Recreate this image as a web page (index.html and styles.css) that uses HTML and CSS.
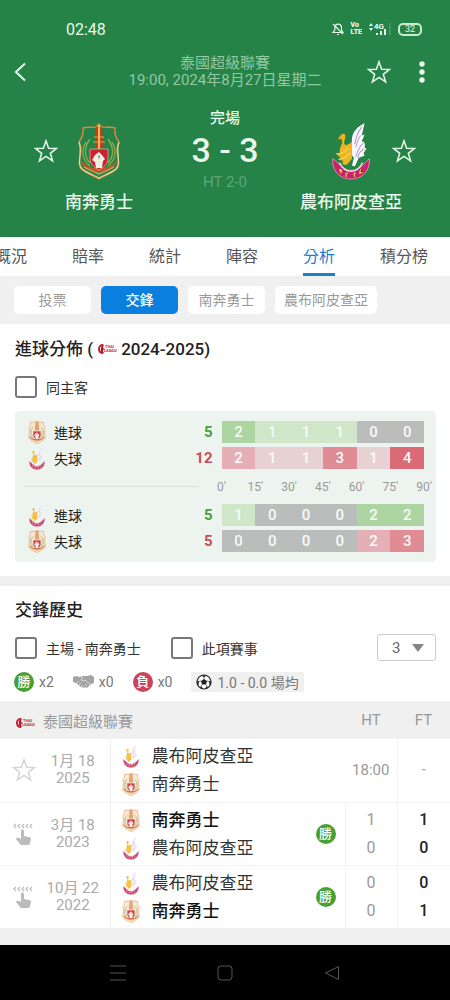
FILE: index.html
```html
<!DOCTYPE html>
<html lang="zh-Hant">
  <head>
    <meta charset="UTF-8" />
    <meta name="viewport" content="width=device-width, initial-scale=1.0" />
    <title>南奔勇士 3 - 3 農布阿皮查亞</title>
    <link rel="stylesheet" href="styles.css">
  </head>
  <body>
    <!-- Shared icons -->
    <svg class="sprite" aria-hidden="true">
      <symbol id="star" viewBox="0 0 24 24">
        <path d="M12 1.8l2.6 7.5 8 .1-6.3 4.9 2.3 7.6-6.6-4.5-6.6 4.5 2.3-7.6-6.3-4.9 8-.1z" fill="none" stroke="currentColor" stroke-width="1.5" stroke-linejoin="miter" />
      </symbol>

      <symbol id="warrior" viewBox="0 0 44 58">
        <path d="M22 2l3 3c4 0 9 0 13 1-1 6 1 10 4 14-3 5-2 9-1 14 0 5 2 7 0 11-4 6-13 8-19 12-6-4-15-6-19-12-2-4 0-6 0-11 1-5 2-9-1-14 3-4 5-8 4-14 4-1 9-1 13-1z" fill="currentColor" stroke="#d9883f" stroke-width="1.4" />
        <path d="M2 20c2 5 1 10 1 14-1 6-1 10 2 13 5 4 12 6 17 9 5-3 12-5 17-9 3-3 3-7 2-13 0-4-1-9 1-14" fill="none" stroke="#ecd9a0" stroke-width="1.2" />
        <path d="M9 20c-5 8-4 18 4 24M35 20c5 8 4 18-4 24M13 17c-6 8-6 18 0 24M31 17c6 8 6 18 0 24" fill="none" stroke="#8fae4c" stroke-width="1.3" />
        <path d="M19 5h2v20h-3zM23 5h2l1 20h-3z" fill="#c93a25" />
        <path d="M21 3h2v24h-2z" fill="#e9c04a" />
        <path d="M17 15h10M16 20h12" stroke="#dfa743" stroke-width="1.2" />
        <path d="M4 38c6 8 12 8 18 8s12 0 18-8c0 7-7 11-18 12C11 49 4 45 4 38z" fill="#bf5a2c" />
        <path d="M7 45c5 3 10 5 15 7 5-2 10-4 15-7" fill="none" stroke="#e3a14e" stroke-width="1.4" />
        <path d="M13 27h18v9c0 6-4 9-9 12-5-3-9-6-9-12z" fill="#cf2031" stroke="#f0a28e" stroke-width=".8" />
        <path d="M22 30l3 3 3 4-2 2-1 7h-6l-1-6-3-2 3-5z" fill="#e9f0e2" />
        <path d="M21 33l2 1-1 4z" fill="#758b78" />
      </symbol>

      <symbol id="bird" viewBox="0 0 42 60">
        <path d="M2 38c7 4 9 12 19 12s13-7 19-12c1 12-7 21-19 21S1 50 2 38z" fill="#c9206f" stroke="#eaa0bd" stroke-width=".8" />
        <path d="M9 42c3 6 7 9 12 9s9-3 12-9" fill="none" stroke="#d9e4da" stroke-width="1.5" />
        <path d="M22 17c1-8 6-12 13-16-1 5-2 9-3 13l3-1c-1 3-2 5-3 7 3 0 4 3 3 6l2 2-3 4 1 3-6 2-4 9-3-1 2-8-3-4z" fill="#fbf8fd" />
        <path d="M32 5c-4 6-6 11-7 18M31 14c-3 4-4 8-5 12M34 22c-5 3-6 8-8 14M35 28c-4 1-6 5-7 9" fill="none" stroke="#b49ad0" stroke-width="1.1" />
        <path d="M7 18l4-5c3-2 5 0 4 3-1 4-2 7 1 8l6-3v17l-5 6c-4 1-6-1-4-4l-6-1 3-2-5-5 5 1c-2-4 1-8 2-12l-1-4z" fill="#efb521" />
        <path d="M6 33c4 0 8-1 12-6M10 38c4 0 7-2 10-6" fill="none" stroke="#f7d85a" stroke-width="1.2" />
        <path d="M9 49l2 4M10 49l2 2M16 53v4M16 53h2M24 53l1 4M24 53h2M31 49l-1 4 3-1" stroke="#f4d94b" stroke-width="1.2" />
      </symbol>

      <symbol id="league" viewBox="0 0 20 14">
        <path d="M6 2C3 2 1 4 1 7s2 5 5 5l1-2C5 10 3 9 3 7s1-3 3-3z" fill="#c52636" />
        <path d="M4 5l3-3-1 4 2 1-2 1v3L4 9z" fill="#a81c2d" />
        <text x="8" y="6" font-size="4">THAI</text>
        <text x="7" y="10" font-size="4">LEAGUE</text>
      </symbol>

      <symbol id="tap" viewBox="0 0 22 24">
        <path d="M4 2L2 4l2 2M8 2L6 4l2 2M12 2l-2 2 2 2M16 2l-2 2 2 2M20 2l-2 2 2 2" fill="none" stroke="currentColor" stroke-width="1.2" />
        <path d="M9 9c0-2 3-2 3 0v5l5 1c1 0 2 1 2 2l-1 4c0 1-1 2-2 2H10c-1 0-1 0-2-1l-4-5c1-2 3-1 5 0z" fill="currentColor" />
      </symbol>
    </svg>

    <header class="match-header">
      <div class="status-bar">
        <span>02:48</span>
        <div class="status-icons">
          <svg width="12" height="14" viewBox="0 0 12 14" fill="none" stroke="currentColor" stroke-width="1.2">
            <path d="M1 10.500h10L9.500 8V5.500C9.500 1.500 4 1 3 4.500L2.800 8zM5 12.500h2M1 2l10 10" />
          </svg>
          <span class="volte">Vo<br>LTE</span>
          <svg width="22" height="14" viewBox="0 0 22 14" fill="currentColor">
            <path d="M0 4l2-3 2 3zM0 6h4L2 9z" />
            <text x="5" y="7" font-size="8" font-weight="700">4G</text>
            <path d="M7 11h2v2H7zM11 9h2v4h-2zM15 7h2v6h-2z" />
            <path d="M20.500 1h.8v12h-.8z" opacity=".4" />
          </svg>
          <span class="battery">32</span>
        </div>
      </div>

      <div class="title-bar">
        <button class="icon-btn back" aria-label="返回">
          <svg width="14" height="20" viewBox="0 0 14 20"><path d="M11 1.500L2 10l9 8.500" fill="none" stroke="currentColor" stroke-width="2" /></svg>
        </button>
        <p class="competition">泰國超級聯賽<br>19:00, 2024年8月27日星期二</p>
        <div class="title-actions">
          <button class="icon-btn" aria-label="收藏"><svg class="star"><use href="#star" /></svg></button>
          <button class="icon-btn" aria-label="更多">
            <svg width="8" height="24" viewBox="0 0 8 24" fill="currentColor"><circle cx="4" cy="4" r="2.700" /><circle cx="4" cy="12" r="2.700" /><circle cx="4" cy="20" r="2.700" /></svg>
          </button>
        </div>
      </div>

      <div class="match">
        <div class="team home">
          <button class="icon-btn" aria-label="收藏南奔勇士"><svg class="star"><use href="#star" /></svg></button>
          <svg class="team-logo"><use href="#warrior" /></svg>
          <h2>南奔勇士</h2>
        </div>
        <div class="score">
          <p class="state">完場</p>
          <p class="result">3 - 3</p>
          <p class="half">HT 2-0</p>
        </div>
        <div class="team away">
          <svg class="team-logo"><use href="#bird" /></svg>
          <button class="icon-btn" aria-label="收藏農布阿皮查亞"><svg class="star"><use href="#star" /></svg></button>
          <h2>農布阿皮查亞</h2>
        </div>
      </div>
    </header>

    <nav class="tabs">
      <a href="#">概況</a>
      <a href="#">賠率</a>
      <a href="#">統計</a>
      <a href="#">陣容</a>
      <a href="#" class="active">分析</a>
      <a href="#">積分榜</a>
    </nav>

    <div class="sub-tabs">
      <button>投票</button>
      <button class="active">交鋒</button>
      <button>南奔勇士</button>
      <button>農布阿皮查亞</button>
    </div>

    <main>
      <!-- Goal distribution -->
      <section class="goals">
        <h3>進球分佈 ( <svg class="league-logo"><use href="#league" /></svg> 2024-2025)</h3>
        <div class="filters">
          <label><input type="checkbox" />同主客</label>
        </div>

        <div class="chart">
          <div class="chart-row">
            <svg class="mini-logo"><use href="#warrior" /></svg>
            <span class="label">進球</span>
            <b class="total scored">5</b>
            <div class="bar"><span class="g2">2</span><span class="g1">1</span><span class="g1">1</span><span class="g1">1</span><span>0</span><span>0</span></div>
          </div>
          <div class="chart-row">
            <svg class="mini-logo"><use href="#bird" /></svg>
            <span class="label">失球</span>
            <b class="total conceded">12</b>
            <div class="bar"><span class="r2">2</span><span class="r1">1</span><span class="r1">1</span><span class="r3">3</span><span class="r1">1</span><span class="r4">4</span></div>
          </div>
          <div class="axis">
            <hr>
            <div class="ticks"><span>0'</span><span>15'</span><span>30'</span><span>45'</span><span>60'</span><span>75'</span><span>90'</span></div>
          </div>
          <div class="chart-row">
            <svg class="mini-logo"><use href="#bird" /></svg>
            <span class="label">進球</span>
            <b class="total scored">5</b>
            <div class="bar"><span class="g1">1</span><span>0</span><span>0</span><span>0</span><span class="g2">2</span><span class="g2">2</span></div>
          </div>
          <div class="chart-row">
            <svg class="mini-logo"><use href="#warrior" /></svg>
            <span class="label">失球</span>
            <b class="total conceded">5</b>
            <div class="bar"><span>0</span><span>0</span><span>0</span><span>0</span><span class="r2">2</span><span class="r3">3</span></div>
          </div>
        </div>
      </section>

      <!-- Head to head -->
      <section class="history">
        <h3>交鋒歷史</h3>
        <div class="filters">
          <label><input type="checkbox" />主場 - 南奔勇士</label>
          <label><input type="checkbox" />此項賽事</label>
          <div class="count">
            <select aria-label="場數">
              <option>3</option>
            </select>
            <svg width="12" height="8" viewBox="0 0 12 8"><path d="M0 0h12L6 8z" fill="#858585" /></svg>
          </div>
        </div>

        <div class="summary">
          <span><i class="badge win">勝</i>x2</span>
          <span>
            <svg width="21" height="14" viewBox="0 0 21 14">
              <path d="M0 2l3-1 4 1 3-1 4 0 4-1 3 2v6l-3 1-4 4-2-1-1 1-2-1-1 0-5-4-3-1z" fill="#a3a3a3" />
              <path d="M10 2L8 5c1 1 2 1 4 0l5 4M4 8l2-2M6 10l2-2M8 12l2-2M12 9l2 2" fill="none" stroke="#fff" stroke-width=".6" />
            </svg>x0
          </span>
          <span><i class="badge lose">負</i>x0</span>
          <span class="average">
            <svg width="16" height="16" viewBox="0 0 16 16">
              <circle cx="8" cy="8" r="7" fill="#fff" stroke="#222" stroke-width="1.200" />
              <path d="M8 5l3 2-1 3.500H6L5 7zM5 1.500h6L8 3.300zM1 6l2 1.500L2.500 11 1 9zM15 6l-2 1.500.5 3.500L15 9zM4 12.500l2 .5 1 2-2-.5zM12 12.500l-2 .5-1 2 2-.5z" fill="#222" />
              <path d="M8 3v2M11 7l2 .5M5 7l-2 .5M6 10.500L5 13M10 10.500l1 2.500" stroke="#222" stroke-width=".6" />
            </svg>1.0 - 0.0 場均
          </span>
        </div>

        <table>
          <thead>
            <tr>
              <th colspan="3" class="league"><svg class="league-logo"><use href="#league" /></svg>泰國超級聯賽</th>
              <th class="ht">HT</th>
              <th class="ft">FT</th>
            </tr>
          </thead>
          <tbody>
            <tr>
              <td class="mark"><svg class="star"><use href="#star" /></svg></td>
              <td class="date">1月 18<br>2025</td>
              <td class="teams">
                <div class="teams-inner">
                  <ul>
                    <li><svg class="mini-logo"><use href="#bird" /></svg>農布阿皮查亞</li>
                    <li><svg class="mini-logo"><use href="#warrior" /></svg>南奔勇士</li>
                  </ul>
                </div>
              </td>
              <td class="ht time">18:00</td>
              <td class="ft none">-</td>
            </tr>
            <tr>
              <td class="mark"><svg class="tap"><use href="#tap" /></svg></td>
              <td class="date">3月 18<br>2023</td>
              <td class="teams">
                <div class="teams-inner">
                  <ul>
                    <li class="winner"><svg class="mini-logo"><use href="#warrior" /></svg>南奔勇士</li>
                    <li><svg class="mini-logo"><use href="#bird" /></svg>農布阿皮查亞</li>
                  </ul>
                  <i class="badge win">勝</i>
                </div>
              </td>
              <td class="ht">1<br>0</td>
              <td class="ft">1<br>0</td>
            </tr>
            <tr>
              <td class="mark"><svg class="tap"><use href="#tap" /></svg></td>
              <td class="date">10月 22<br>2022</td>
              <td class="teams">
                <div class="teams-inner">
                  <ul>
                    <li><svg class="mini-logo"><use href="#bird" /></svg>農布阿皮查亞</li>
                    <li class="winner"><svg class="mini-logo"><use href="#warrior" /></svg>南奔勇士</li>
                  </ul>
                  <i class="badge win">勝</i>
                </div>
              </td>
              <td class="ht">0<br>0</td>
              <td class="ft">0<br>1</td>
            </tr>
          </tbody>
        </table>
      </section>
    </main>

    <footer class="system-nav">
      <button aria-label="選單"><svg width="16" height="16" viewBox="0 0 16 16"><path d="M0 1h16M0 8h16M0 15h16" /></svg></button>
      <button aria-label="主畫面"><svg width="16" height="16" viewBox="0 0 16 16"><rect x="1" y="1" width="14" height="14" rx="3" /></svg></button>
      <button aria-label="上一頁"><svg width="16" height="16" viewBox="0 0 16 16"><path d="M14.500 1.500v13L1.500 8z" stroke-linejoin="round" /></svg></button>
    </footer>
  </body>
</html>
```
FILE: styles.css
```css
/* Global Styles */
* {
  box-sizing: border-box;
}

body {
  font-family: Roboto, "Noto Sans CJK TC", sans-serif;
  font-size: 14px;
  color: #333;
  background: #f0f0f0;
  margin: 0;
  min-height: 100vh;
  display: flex;
  flex-direction: column;
  overflow-x: hidden;
}

h2,
h3,
p,
ul {
  margin: 0;
  padding: 0;
}

button,
select {
  font: inherit;
}

svg {
  display: block;
  flex: none;
}

.sprite {
  display: none;
}

.icon-btn {
  padding: 0;
  border: none;
  background: none;
  color: inherit;
}

.star {
  width: 24px;
  height: 24px;
}

.league-logo {
  width: 20px;
  height: 14px;
  fill: #c52636;
  font-weight: 700;
}

.mini-logo {
  width: 20px;
  height: 24px;
  color: #fae5d3;
  opacity: 0.85;
}

/* Header */
.match-header {
  background: #258347;
  color: #e9f8ec;
  padding-bottom: 23px;
}

.status-bar {
  display: flex;
  justify-content: space-between;
  align-items: center;
  height: 40px;
  padding: 18px 28px 0 66px;
  font-size: 16px;
}

.status-icons {
  display: flex;
  align-items: center;
  gap: 7px;
}

.volte {
  font-size: 7px;
  line-height: 7px;
  font-weight: 900;
}

.battery {
  width: 24px;
  border: 2px solid #c9ecd0;
  border-radius: 5px;
  font-size: 9px;
  line-height: 9px;
  text-align: center;
}

.title-bar {
  display: grid;
  grid-template-columns: 1fr auto 1fr;
  align-items: center;
  margin: 15px 24px 19px 14px;
}

.back {
  justify-self: start;
}

.competition {
  font-size: 15px;
  line-height: 17px;
  text-align: center;
  color: #93c8a3;
  margin-left: 10px;
}

.title-actions {
  display: flex;
  justify-content: flex-end;
  align-items: center;
  gap: 27px;
}

.match {
  display: grid;
  grid-template-columns: 1fr 122px 1fr;
  padding: 0 34px;
}

.team {
  display: grid;
  grid-template-columns: 1fr 44px 1fr;
  align-items: center;
  padding-top: 14px;
  row-gap: 10px;
}

.team .icon-btn {
  justify-self: start;
}

.away .icon-btn {
  justify-self: end;
}

.team-logo {
  width: 44px;
  height: 58px;
  grid-column: 2;
  color: #258347;
}

.team h2 {
  grid-column: 1 / -1;
  font-size: 17px;
  line-height: 24px;
  font-weight: 500;
  text-align: center;
}

.score {
  text-align: center;
}

.state {
  font-size: 15px;
  line-height: 20px;
  font-weight: 500;
}

.result {
  font-size: 34px;
  line-height: 44px;
  font-weight: 500;
}

.half {
  font-size: 15px;
  line-height: 20px;
  color: #5fa578;
}

/* Tabs */
.tabs {
  display: flex;
  gap: 45px;
  margin-left: -5px;
  padding-top: 4px;
  background: #fff;
}

.tabs a {
  flex: none;
  font-size: 16px;
  line-height: 32px;
  color: #555;
  text-decoration: none;
  border-bottom: 3px solid transparent;
}

.tabs a.active {
  color: #1a7fcd;
  border-color: #1a7fcd;
}

.sub-tabs {
  display: flex;
  gap: 10px;
  padding: 10px 14px;
}

.sub-tabs button {
  min-width: 77px;
  padding: 0 9px;
  border: none;
  border-radius: 5px;
  background: #fff;
  color: #999;
  line-height: 28px;
}

.sub-tabs button.active {
  background: #0b7fe0;
  color: #fff;
  font-weight: 500;
}

/* Sections */
section {
  background: #fff;
}

h3 {
  display: flex;
  align-items: center;
  gap: 4px;
  font-size: 17px;
  line-height: 22px;
  font-weight: 500;
  color: #222;
}

.goals {
  padding: 14px 14px 14px 15px;
  margin-bottom: 10px;
}

.filters {
  display: flex;
  align-items: center;
  gap: 30px;
}

.filters label {
  display: flex;
  align-items: center;
  gap: 9px;
}

.filters input {
  appearance: none;
  width: 22px;
  height: 22px;
  margin: 0;
  border: 2px solid #777;
  border-radius: 3px;
}

.goals .filters {
  margin: 16px 0 13px;
}

/* Goal chart */
.chart {
  background: #edf4f0;
  border-radius: 4px;
  padding: 10px 12px;
}

.chart-row {
  display: flex;
  align-items: center;
  height: 22px;
}

.chart-row + .chart-row {
  margin-top: 4px;
}

.label {
  margin-left: 7px;
  color: #222;
}

.total {
  flex: 1;
  margin-right: 9px;
  font-size: 15px;
  text-align: right;
}

.scored {
  color: #4a9e3b;
}

.conceded {
  color: #c94b59;
}

.bar {
  display: flex;
  width: 51%;
}

.bar span {
  flex: 1;
  background: #bbbcbc;
  color: #f8faf8;
  font-size: 15px;
  font-weight: 500;
  line-height: 22px;
  text-align: center;
}

.bar .g1 {
  background: #cfe6c8;
}

.bar .g2 {
  background: #add5a1;
}

.bar .r1 {
  background: #e8d1d3;
}

.bar .r2 {
  background: #e5b0b5;
}

.bar .r3 {
  background: #e08c95;
}

.bar .r4 {
  background: #da6b76;
}

.axis {
  display: flex;
  align-items: center;
  height: 35px;
}

.axis hr {
  flex: 1;
  margin: 0 23px 0 -3px;
  border: none;
  border-top: 1px solid #dcdfdd;
}

/* labels sit on the borders between the bar cells */
.ticks {
  display: flex;
  width: 51%;
}

.ticks span {
  flex: 1;
  font-size: 12px;
  text-align: center;
  color: #999;
}

.ticks span:first-child {
  margin-left: -17px;
}

.ticks span:last-child {
  margin-right: -17px;
}

/* History */
.history h3 {
  padding: 13px 15px;
}

.history .filters {
  padding: 0 14px 0 15px;
}

.count {
  position: relative;
  margin-left: auto;
}

.count select {
  appearance: none;
  width: 59px;
  height: 27px;
  padding: 0 14px;
  border: 1px solid #ccc;
  border-radius: 3px;
  background: #fff;
  color: #666;
  font-size: 15px;
}

.count svg {
  position: absolute;
  right: 12px;
  top: 10px;
  pointer-events: none;
}

.summary {
  display: flex;
  gap: 19px;
  padding: 11px 14px 9px;
  color: #777;
}

.summary span {
  display: flex;
  align-items: center;
  gap: 5px;
  height: 20px;
}

.summary .average {
  padding: 0 5px;
  background: #f0f0f0;
  border-radius: 2px;
}

.badge {
  width: 20px;
  border-radius: 50%;
  color: #fff;
  font-size: 13px;
  line-height: 20px;
  font-style: normal;
  font-weight: 500;
  text-align: center;
}

.win {
  background: #48a035;
}

.lose {
  background: #cb4459;
}

table {
  width: 100%;
  border-collapse: collapse;
}

th {
  height: 38px;
  padding: 0;
  background: #f0f0f0;
  color: #999;
  font-size: 15px;
  font-weight: 400;
}

.league svg {
  display: inline-block;
  margin: 0 8px 0 15px;
  vertical-align: middle;
}

.league {
  text-align: left;
}

td {
  height: 63px;
  padding: 0;
  border-bottom: 1px solid #f3f3f3;
}

.mark {
  width: 36px;
  padding-left: 12px;
  color: #d5d5d5;
}

.tap {
  width: 22px;
  height: 24px;
  color: #bbb;
}

.date {
  width: 74px;
  color: #aaa;
  font-size: 15px;
  line-height: 17px;
  text-align: center;
}

.teams {
  padding: 0 9px 0 10px;
  border-left: 1px solid #eee;
}

.teams-inner {
  display: flex;
  justify-content: space-between;
  align-items: center;
}

.teams ul {
  list-style: none;
}

.teams li {
  display: flex;
  align-items: center;
  gap: 11px;
  font-size: 17px;
  line-height: 28px;
}

.winner {
  font-weight: 500;
  color: #111;
}

td.ht,
td.ft {
  border-left: 1px solid #f3f3f3;
  font-size: 16px;
  line-height: 28px;
  text-align: center;
}

.ht {
  width: 52px;
}

.ft {
  width: 53px;
}

td.ht {
  color: #999;
}

td.ft {
  color: #222;
  font-weight: 500;
}

td.time {
  border-left: none;
  font-size: 15px;
}

td.none {
  color: #aaa;
  font-weight: 400;
}

/* Android navigation */
.system-nav {
  display: flex;
  align-items: center;
  height: 55px;
  margin-top: auto;
  padding: 0 64px;
  background: #000;
}

.system-nav button {
  flex: 1;
  display: flex;
  justify-content: center;
  padding: 0;
  border: none;
  background: none;
}

.system-nav svg {
  fill: none;
  stroke: #555;
  stroke-width: 1px;
}
```
